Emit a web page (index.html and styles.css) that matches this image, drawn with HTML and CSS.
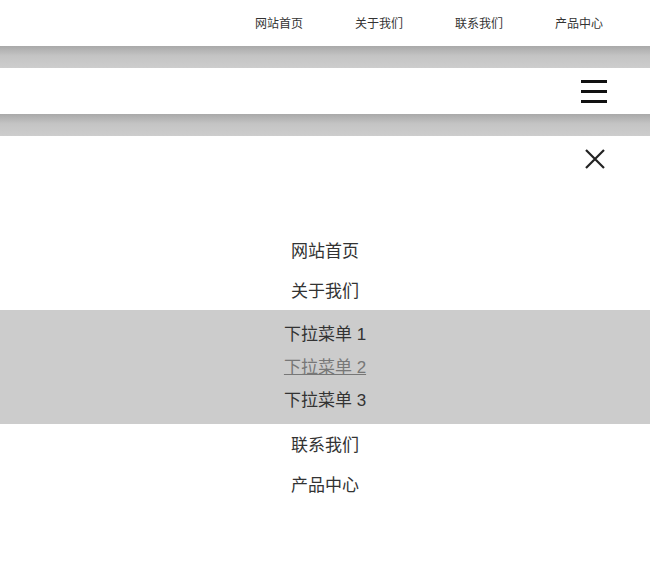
FILE: index.html
```html
<!DOCTYPE html>
<html>
    <head>
        <title>导航菜单</title>
        <link rel="stylesheet" href="styles.css">
    </head>
    <body>
        <nav class="top-nav">
            <a href="#">网站首页</a>
            <a href="#">关于我们</a>
            <a href="#">联系我们</a>
            <a href="#">产品中心</a>
        </nav>
        <div class="band"></div>
        <div class="mobile-bar">
            <button class="menu-btn" aria-label="菜单">
                <span></span><span></span><span></span>
            </button>
        </div>
        <div class="band"></div>
        <div class="mobile-menu">
            <div class="close-row">
                <button class="close-btn" aria-label="关闭">
                    <svg width="22" height="22" viewBox="0 0 22 22">
                        <path d="M2 2 L20 20 M20 2 L2 20" stroke="#222" stroke-width="2.2" fill="none"/>
                    </svg>
                </button>
            </div>
            <ul class="menu-list">
                <li><a href="#">网站首页</a></li>
                <li><a href="#">关于我们</a></li>
                <li class="has-sub">
                    <ul class="sub-list">
                        <li><a href="#">下拉菜单 1</a></li>
                        <li><a href="#" class="current">下拉菜单 2</a></li>
                        <li><a href="#">下拉菜单 3</a></li>
                    </ul>
                </li>
                <li><a href="#">联系我们</a></li>
                <li><a href="#">产品中心</a></li>
            </ul>
        </div>
    </body>
</html>
```

FILE: styles.css
```css
* {
    box-sizing: border-box;
    margin: 0;
    padding: 0;
    font-family: "Liberation Sans", "Noto Sans CJK SC", sans-serif;
    }

    body {
    background: #fff;
    color: #333;
    }

    a {
    color: #333;
    text-decoration: none;
    }

    .top-nav {
    height: 46px;
    display: flex;
    justify-content: flex-end;
    align-items: center;
    padding: 0 21px 2px 0;
    }

    .top-nav a {
    width: 100px;
    text-align: center;
    font-size: 12px;
    }

    .band {
    height: 22px;
    background: linear-gradient(to bottom, #a9a9a9 0%, #c4c4c4 45%, #cdcdcd 100%);
    }

    .mobile-bar {
    height: 46px;
    background: #fff;
    display: flex;
    justify-content: flex-end;
    align-items: center;
    padding-right: 43px;
    }

    .menu-btn {
    border: none;
    background: none;
    width: 26px;
    display: flex;
    flex-direction: column;
    gap: 7px;
    cursor: pointer;
    }

    .menu-btn span {
    display: block;
    height: 3px;
    background: #111;
    }

    .close-row {
    display: flex;
    justify-content: flex-end;
    padding: 12px 44px 0 0;
    height: 94px;
    }

    .close-btn {
    border: none;
    background: none;
    width: 22px;
    height: 22px;
    cursor: pointer;
    }

    .menu-list {
    list-style: none;
    text-align: center;
    }

    .menu-list > li > a {
    display: block;
    padding-top: 4px;
    line-height: 36px;
    font-size: 17px;
    }

    .has-sub {
    background: #cccccc;
    padding: 8px 0 7px;
    }

    .sub-list {
    list-style: none;
    }

    .sub-list a {
    display: block;
    padding-top: 1px;
    line-height: 32px;
    font-size: 17px;
    }

    .sub-list a.current {
    color: #777;
    text-decoration: underline;
    }
```
